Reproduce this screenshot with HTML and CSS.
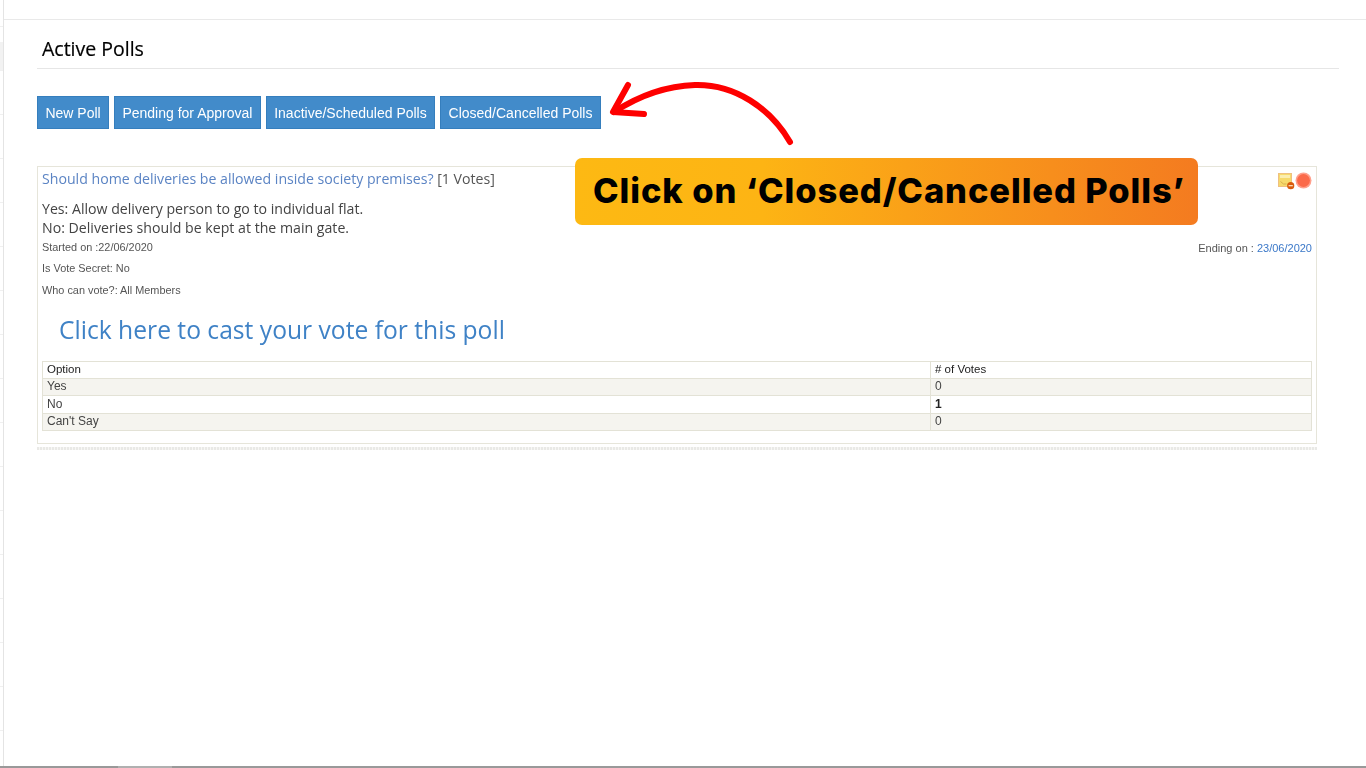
FILE: index.html
```html
<!DOCTYPE html>
<html lang="en">
<head>
<meta charset="utf-8">
<title>Active Polls</title>
<link rel="stylesheet" href="styles.css">
</head>
<body>
<div class="frame">
  <aside class="rail"></aside>
  <div class="content">
    <div class="topbar"></div>
    <main class="main">
      <h1 class="title">Active Polls</h1>
      <nav class="actions">
        <a class="btn">New Poll</a>
        <a class="btn">Pending for Approval</a>
        <a class="btn">Inactive/Scheduled Polls</a>
        <a class="btn">Closed/Cancelled Polls</a>
      </nav>
      <section class="poll">
        <div class="poll-head">
          <p class="question"><a class="question-link">Should home deliveries be allowed inside society premises?</a> [1 Votes]</p>
          <div class="poll-icons">
            <svg class="icon-note" width="17" height="17" viewBox="0 0 17 17">
              <rect x="0.5" y="0.5" width="13" height="13" fill="#f6da6c" stroke="#efc080"/>
              <rect x="2" y="2" width="10" height="3" fill="#fbeeb0"/>
              <path d="M2.5 8.5l3 2.5h3" fill="none" stroke="#d8b050"/>
              <circle cx="12.7" cy="12.7" r="3.6" fill="#d95c0c"/>
              <rect x="10.6" y="12" width="4.2" height="1.3" fill="#fbd9b8"/>
            </svg>
            <svg class="icon-dot" width="17" height="17" viewBox="0 0 17 17">
              <circle cx="8.5" cy="8.5" r="8" fill="#ffa08c"/>
              <circle cx="8.5" cy="8.5" r="6.4" fill="#fb6a4a"/>
            </svg>
          </div>
        </div>
        <p class="desc">Yes: Allow delivery person to go to individual flat.<br>No: Deliveries should be kept at the main gate.</p>
        <div class="meta-row">
          <span class="meta">Started on :22/06/2020</span>
          <span class="meta meta-end">Ending on : <a class="date">23/06/2020</a></span>
        </div>
        <p class="meta meta-secret">Is Vote Secret: No</p>
        <p class="meta meta-who">Who can vote?: All Members</p>
        <a class="cast">Click here to cast your vote for this poll</a>
        <table class="results">
          <thead>
            <tr><th class="col-option">Option</th><th># of Votes</th></tr>
          </thead>
          <tbody>
            <tr class="alt"><td>Yes</td><td>0</td></tr>
            <tr><td>No</td><td><b>1</b></td></tr>
            <tr class="alt"><td>Can't Say</td><td>0</td></tr>
          </tbody>
        </table>
      </section>
      <div class="dots"></div>
    </main>
  </div>
</div>
<div class="bottom-line"><span class="bottom-tab"></span></div>
<svg class="arrow" width="200" height="80" viewBox="600 75 200 80">
  <path d="M790 142C770 108 735 84 695 85C665 86 637 97 614 112" fill="none" stroke="#fe0000" stroke-width="6" stroke-linecap="round"/>
  <path d="M628 85L613 112L644 114" fill="none" stroke="#fe0000" stroke-width="6" stroke-linecap="round" stroke-linejoin="round"/>
</svg>
<div class="callout">Click on ‘Closed/Cancelled Polls’</div>
</body>
</html>
```
FILE: styles.css
```css
* { box-sizing: border-box; }
html, body { margin: 0; height: 100%; }
body {
  background: #fff;
  font-family: "Liberation Sans", Arial, sans-serif;
  color: #444;
  overflow: hidden;
  position: relative;
}
.frame {
  display: flex;
  height: 766px;
}
.bottom-line {
  height: 2px;
  padding-left: 118px;
  background: #999;
}
.bottom-tab {
  display: block;
  width: 54px;
  height: 2px;
  background: #b0b0b0;
}
.rail {
  width: 4px;
  flex: none;
  border-right: 1px solid #e4e4e4;
  background:
    linear-gradient(#f2f2f2, #f2f2f2) 0 42px / 100% 28px no-repeat,
    linear-gradient(to bottom, #fff 43px, #f0f0f0 43px) 0 27px / 100% 44px repeat-y;
}
.content { flex: 1; min-width: 0; }
.topbar { height: 20px; border-bottom: 1px solid #e9e9e9; }
.main {
  padding: 0 27px 0 33px;
  filter: blur(0.35px);
}
.title {
  margin: 0;
  height: 49px;
  padding: 17px 0 0 5px;
  border-bottom: 1px solid #e6e6e6;
  font: 400 19.5px/24px "Open Sans", sans-serif;
  color: #000;
  -webkit-text-stroke: 0.2px #000;
}
.actions {
  display: flex;
  gap: 5px;
  margin-top: 27px;
}
.btn {
  display: block;
  height: 33px;
  padding: 0 7.4px;
  background: #428bca;
  border: 1px solid #357ebd;
  color: #fff;
  font-size: 14px;
  line-height: 33px;
}
.poll {
  width: 1280px;
  height: 278px;
  margin-top: 37px;
  padding: 0 4px;
  border: 1px solid #e6e5da;
}
.poll-head {
  display: flex;
  justify-content: space-between;
  height: 24px;
}
.question {
  margin: 0;
  font: 400 14.15px/24px "Open Sans", sans-serif;
  color: #555;
}
.question-link { color: #5b84c4; }
.poll-icons { display: flex; padding-top: 5px; height: 22px; }
.icon-note { margin-top: 1px; }
.desc {
  margin: 8px 0 0;
  font: 400 14.15px/19px "Open Sans", sans-serif;
  color: #444;
}
.meta-row {
  display: flex;
  justify-content: space-between;
  height: 20px;
  margin-top: 3px;
}
.meta {
  font-size: 10.9px;
  line-height: 14px;
  color: #555;
  margin: 0;
}
.meta-end { font-size: 11px; line-height: 16px; }
.date { color: #3b78c8; }
.meta-secret { margin-top: 1px; }
.meta-who { margin-top: 8px; }
.cast {
  display: block;
  margin: 13px 0 0 17px;
  font: 400 24.65px/40px "Open Sans", sans-serif;
  color: #3f82c6;
}
.results {
  width: 1270px;
  margin-top: 11px;
  border-collapse: collapse;
  font-size: 12px;
  table-layout: fixed;
}
.results th, .results td {
  height: 17.5px;
  padding: 0 4px 1px;
  border: 1px solid #e3e2d6;
  text-align: left;
  font-weight: 400;
  line-height: 14px;
  color: #444;
}
.results th {
  height: 16.5px;
  padding-bottom: 0;
  font-size: 11.5px;
  line-height: 13px;
  color: #222;
}
.results td b { font-weight: 700; color: #222; }
.col-option { width: 888px; }
.alt td { background: #f5f4ef; }
.dots {
  width: 1280px;
  height: 3px;
  margin-top: 3px;
  background: repeating-linear-gradient(90deg, #e9e9e6 0 2px, #f7f7f5 2px 3px);
}
.arrow {
  position: absolute;
  left: 600px;
  top: 75px;
}
.callout {
  position: absolute;
  left: 575px;
  top: 158px;
  width: 623px;
  height: 67px;
  padding-left: 18px;
  border-radius: 7px;
  background: linear-gradient(90deg, #fdb913 0%, #fdb414 30%, #f47b20 100%);
  color: #000;
  font: 800 34.5px/66px Inter, "Open Sans", sans-serif;
  letter-spacing: 0.9px;
  white-space: nowrap;
}
```
